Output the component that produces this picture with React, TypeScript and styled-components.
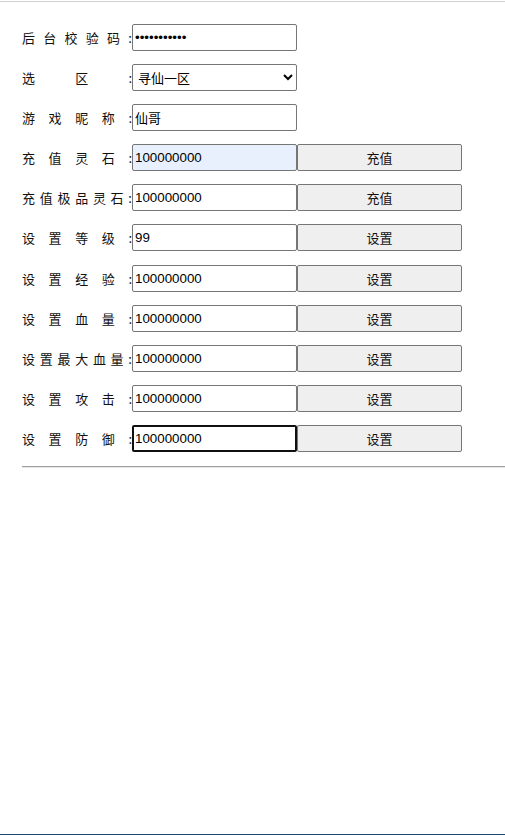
import React from "react";
import styled, { createGlobalStyle } from "styled-components";

const Global = createGlobalStyle`
  html, body { margin: 0; padding: 0; background: #fff; }
  body { font-family: "Noto Sans CJK SC", "Microsoft YaHei", sans-serif; color: #111; }
`;

const Page = styled.div`
  min-height: 100vh;
  box-sizing: border-box;
  display: flex;
  flex-direction: column;
  border-top: 1px solid #d0d0d0;
  margin-top: 1px;
  border-bottom: 2px solid #1d4a72;
`;

const Form = styled.div`
  display: flex;
  flex-direction: column;
  gap: 13.1px;
  padding: 22px 0 0 22px;
`;

const Row = styled.div`
  display: flex;
  align-items: center;
  height: 27px;
`;

const Label = styled.div`
  width: 110px;
  display: flex;
  justify-content: space-between;
  font-size: 13px;
  line-height: 27px;
  color: #111;
`;

const fieldBase = `
  box-sizing: border-box;
  width: 165px;
  height: 27px;
  border: 1px solid #767676;
  border-radius: 2px;
  padding: 1px 2px;
  margin: 0;
  outline: none;
  color: #000;
`;

const Input = styled.input<{ $filled?: boolean; $active?: boolean; $cjk?: boolean }>`
  ${fieldBase}
  font-family: ${(p) =>
    p.$cjk
      ? '"Noto Sans CJK SC", sans-serif'
      : '"Liberation Sans", Arial, "Noto Sans CJK SC", sans-serif'};
  font-size: ${(p) => (p.$cjk ? "13px" : "13.33px")};
  background: ${(p) => (p.$filled ? "#e8f0fe" : "#fff")};
  ${(p) => (p.$active ? "border: 2px solid #101010; padding: 0 1px;" : "")}
`;

const Select = styled.select`
  ${fieldBase}
  font-family: "Noto Sans CJK SC", sans-serif;
  font-size: 13px;
  background: #fff;
  padding: 0 1px;
`;

const Button = styled.button`
  box-sizing: border-box;
  width: 165px;
  height: 27px;
  margin: 0;
  border: 1px solid #767676;
  border-radius: 2px;
  background: #efefef;
  font-family: "Noto Sans CJK SC", sans-serif;
  font-size: 13px;
  color: #111;
  padding: 0;
`;

const Divider = styled.hr`
  margin: 14px 0 0 22px;
  border: none;
  border-top: 1px solid #a0a0a0;
  border-bottom: 1px solid #e6e6e6;
  height: 0;
`;

const LabelText = ({ text }: { text: string }) => (
  <Label>
    {[...text, ":"].map((c, i) => (
      <span key={i}>{c}</span>
    ))}
  </Label>
);

type Item = {
  label: string;
  value: string;
  action?: string;
  filled?: boolean;
  active?: boolean;
};

const items: Item[] = [
  { label: "充值灵石", value: "100000000", action: "充值", filled: true },
  { label: "充值极品灵石", value: "100000000", action: "充值" },
  { label: "设置等级", value: "99", action: "设置" },
  { label: "设置经验", value: "100000000", action: "设置" },
  { label: "设置血量", value: "100000000", action: "设置" },
  { label: "设置最大血量", value: "100000000", action: "设置" },
  { label: "设置攻击", value: "100000000", action: "设置" },
  { label: "设置防御", value: "100000000", action: "设置", active: true },
];

export default function App() {
  return (
    <>
      <Global />
      <Page>
        <Form>
          <Row>
            <LabelText text="后台校验码" />
            <Input type="password" defaultValue="aaaaaaaaaaa" />
          </Row>
          <Row>
            <LabelText text="选区" />
            <Select defaultValue="1">
              <option value="1">寻仙一区</option>
            </Select>
          </Row>
          <Row>
            <LabelText text="游戏昵称" />
            <Input defaultValue="仙哥" $cjk />
          </Row>
          {items.map((it) => (
            <Row key={it.label}>
              <LabelText text={it.label} />
              <Input defaultValue={it.value} $filled={it.filled} $active={it.active} />
              <Button>{it.action}</Button>
            </Row>
          ))}
        </Form>
        <Divider />
      </Page>
    </>
  );
}
